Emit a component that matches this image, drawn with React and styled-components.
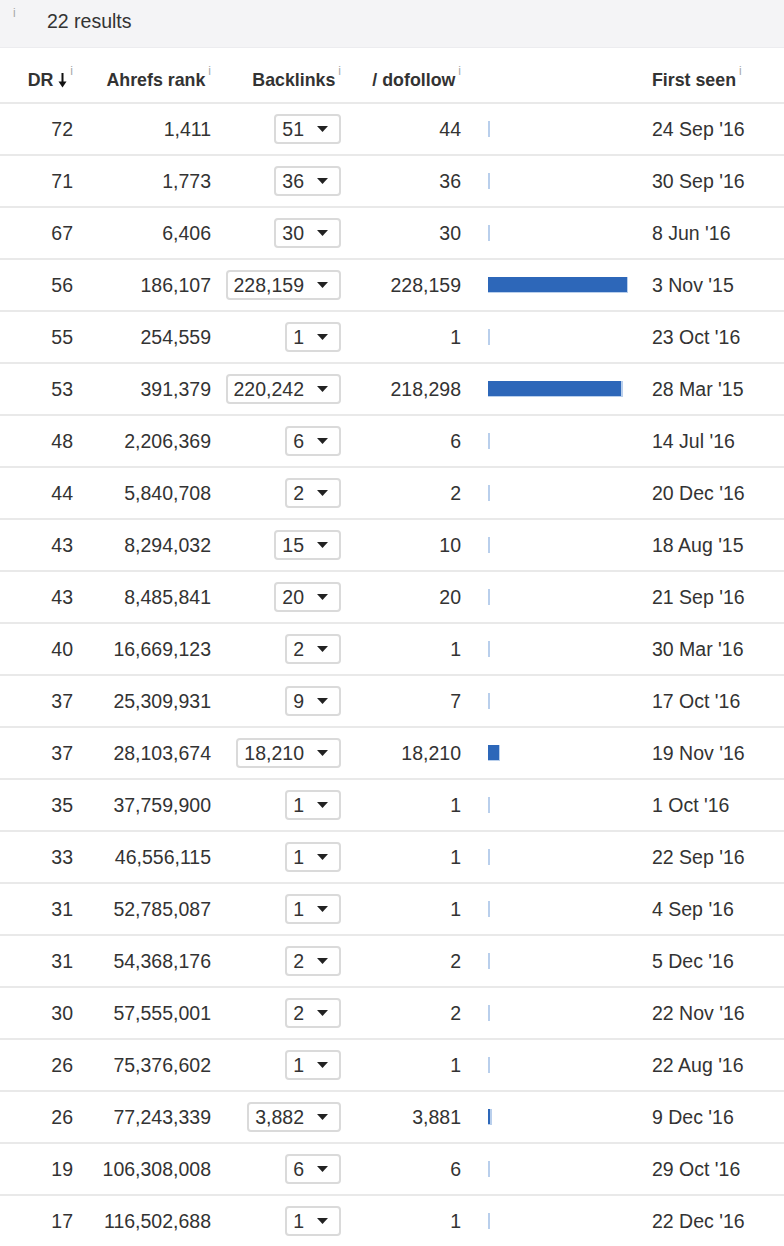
import React from "react";
import styled, { createGlobalStyle } from "styled-components";

const rows = [
  [72, "1,411", 51, 44, "24 Sep '16"],
  [71, "1,773", 36, 36, "30 Sep '16"],
  [67, "6,406", 30, 30, "8 Jun '16"],
  [56, "186,107", 228159, 228159, "3 Nov '15"],
  [55, "254,559", 1, 1, "23 Oct '16"],
  [53, "391,379", 220242, 218298, "28 Mar '15"],
  [48, "2,206,369", 6, 6, "14 Jul '16"],
  [44, "5,840,708", 2, 2, "20 Dec '16"],
  [43, "8,294,032", 15, 10, "18 Aug '15"],
  [43, "8,485,841", 20, 20, "21 Sep '16"],
  [40, "16,669,123", 2, 1, "30 Mar '16"],
  [37, "25,309,931", 9, 7, "17 Oct '16"],
  [37, "28,103,674", 18210, 18210, "19 Nov '16"],
  [35, "37,759,900", 1, 1, "1 Oct '16"],
  [33, "46,556,115", 1, 1, "22 Sep '16"],
  [31, "52,785,087", 1, 1, "4 Sep '16"],
  [31, "54,368,176", 2, 2, "5 Dec '16"],
  [30, "57,555,001", 2, 2, "22 Nov '16"],
  [26, "75,376,602", 1, 1, "22 Aug '16"],
  [26, "77,243,339", 3882, 3881, "9 Dec '16"],
  [19, "106,308,008", 6, 6, "29 Oct '16"],
  [17, "116,502,688", 1, 1, "22 Dec '16"],
];

const MAX = 228159;
const BAR_WIDTH = 139;
const fmt = (n) => n.toLocaleString("en-US");

function InfoMark() {
  return <Info>i</Info>;
}

function SortArrow() {
  return (
    <svg width="9" height="15" viewBox="0 0 9 15" style={{ marginLeft: 5 }}>
      <rect x="3.5" y="0" width="2" height="10" fill="#111" />
      <path d="M0.5 8.5 L8.5 8.5 L4.5 14.5 Z" fill="#111" />
    </svg>
  );
}

function Caret() {
  return (
    <svg width="11" height="6" viewBox="0 0 11 6">
      <path d="M0 0 L11 0 L5.5 6 Z" fill="#222" />
    </svg>
  );
}

function LinkBar({ total, dofollow }) {
  const dark = (dofollow / MAX) * BAR_WIDTH;
  const light = Math.max(2, (total / MAX) * BAR_WIDTH + 1.2);
  return (
    <BarTrack style={{ width: light }}>
      <BarFill style={{ width: dark }} />
    </BarTrack>
  );
}

export default function App() {
  return (
    <>
      <GlobalStyle />
      <Page>
        <Summary>
          <SummaryInfo>i</SummaryInfo>
          <span>22 results</span>
        </Summary>
        <HeaderRow>
          <HeadCell align="right">
            DR
            <SortArrow />
            <InfoMark />
          </HeadCell>
          <HeadCell align="right">
            Ahrefs rank
            <InfoMark />
          </HeadCell>
          <HeadCell align="right">
            Backlinks
            <InfoMark />
          </HeadCell>
          <HeadCell align="right">
            / dofollow
            <InfoMark />
          </HeadCell>
          <HeadCell />
          <HeadCell align="left">
            First seen
            <InfoMark />
          </HeadCell>
        </HeaderRow>
        {rows.map(([dr, rank, total, dofollow, seen], i) => (
          <Row key={i}>
            <Cell align="right">{dr}</Cell>
            <Cell align="right">{rank}</Cell>
            <Cell align="right">
              <Dropdown>
                <span>{fmt(total)}</span>
                <Caret />
              </Dropdown>
            </Cell>
            <Cell align="right">{fmt(dofollow)}</Cell>
            <BarCell>
              <LinkBar total={total} dofollow={dofollow} />
            </BarCell>
            <Cell align="left">{seen}</Cell>
          </Row>
        ))}
      </Page>
    </>
  );
}

const GlobalStyle = createGlobalStyle`
  html, body {
    margin: 0;
    padding: 0;
    background: #ffffff;
  }
  body {
    font-family: "Liberation Sans", Arial, Helvetica, sans-serif;
    color: #333333;
  }
`;

const Page = styled.div`
  width: 784px;
  height: 1246px;
  overflow: hidden;
  background: #ffffff;
`;

const Summary = styled.div`
  height: 48px;
  box-sizing: border-box;
  background: #f4f4f6;
  display: flex;
  align-items: center;
  padding: 0 0 4px 13px;
  font-size: 19.5px;
  color: #333;
  border-bottom: 1px solid #ececef;
`;

const SummaryInfo = styled.span`
  font-size: 12px;
  color: #a8a8a8;
  align-self: flex-start;
  margin-top: 6px;
  width: 34px;
`;

const grid = `
  display: grid;
  grid-template-columns: 85px 138px 130px 120px 167px 1fr;
  border-bottom: 2px solid #e9e9e9;
`;

const HeaderRow = styled.div`
  ${grid}
  height: 54px;
`;

const Row = styled.div`
  ${grid}
  height: 50px;
`;

const HeadCell = styled.div`
  display: flex;
  align-items: center;
  justify-content: ${(p) => (p.align === "left" ? "flex-start" : "flex-end")};
  padding: 10px 12px 0 ${(p) => (p.align === "left" ? "12px" : "0")};
  font-size: 17.8px;
  font-weight: 700;
  color: #333;
  white-space: nowrap;
`;

const Info = styled.span`
  font-size: 12px;
  font-weight: 400;
  color: #a8a8a8;
  margin-left: 3px;
  position: relative;
  top: -9px;
`;

const Cell = styled.div`
  display: flex;
  align-items: center;
  justify-content: ${(p) => (p.align === "left" ? "flex-start" : "flex-end")};
  padding: 0 12px 0 ${(p) => (p.align === "left" ? "12px" : "0")};
  font-size: 19.5px;
  color: #333;
  white-space: nowrap;
`;

const Dropdown = styled.div`
  display: inline-flex;
  align-items: center;
  gap: 13px;
  height: 30px;
  box-sizing: border-box;
  padding: 0 11px 0 6px;
  border: 2px solid #dadada;
  border-radius: 4px;
  font-size: 19.5px;
  color: #333;
  background: #fff;
`;

const BarCell = styled.div`
  display: flex;
  align-items: center;
  padding-left: 15px;
`;

const BarTrack = styled.div`
  position: relative;
  height: 16px;
  background: #b9cfec;
`;

const BarFill = styled.div`
  height: 15px;
  background: #2d67b9;
`;
